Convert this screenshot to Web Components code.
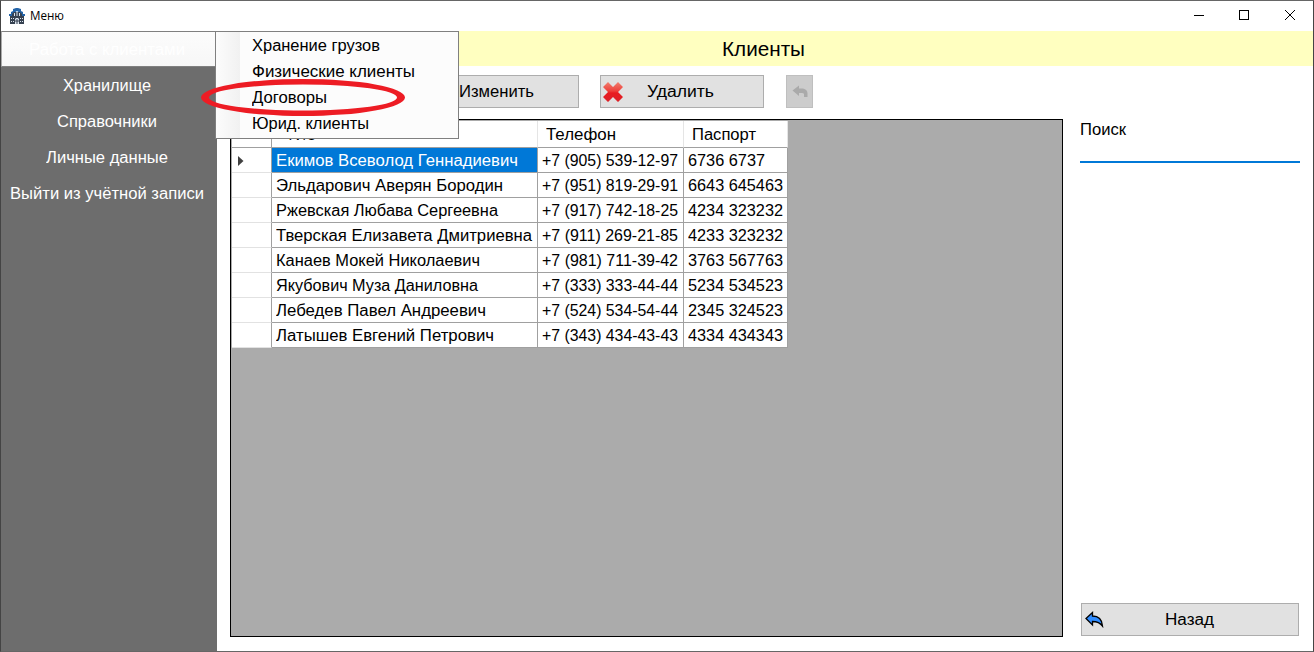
<!DOCTYPE html>
<html lang="ru"><head><meta charset="utf-8"><title>Меню</title>
<style>html,body{margin:0;height:100%;overflow:hidden}body{font:16px "Liberation Sans",Arial,sans-serif;color:#000}</style></head>
<body><app-window></app-window>
<script>
function define(name, render, after) {
  customElements.define(name, class extends HTMLElement {
    constructor() { super(); this.attachShadow({mode: 'open'}); }
    connectedCallback() {
      this.shadowRoot.innerHTML = '<style>*{box-sizing:border-box}</style>' + render(this);
      if (after) after(this);
    }
  });
}
// Label whose glyphs are widened so that it takes up the width in its "w" attribute.
define('fit-label', () => `<style>:host{display:inline-block;white-space:pre;flex:none}span{display:inline-block;transform-origin:0 50%}</style><span><slot></slot></span>`, el => {
  const s = el.shadowRoot.querySelector('span'), w = +el.getAttribute('w');
  el.style.width = w + 'px';
  s.style.transform = 'scaleX(' + w / s.getBoundingClientRect().width + ')';
});
define('title-bar', () => `<style>:host{display:flex;height:30px;align-items:center;background:#fff;font:12px "Open Sans","Noto Sans",sans-serif;padding-left:8px}
.i{width:16px;height:16px;margin-right:5px}.sp{flex:1}.c{width:46px;height:30px;flex:none}fit-label{padding-bottom:2px}.c:last-child{margin-right:-1px}</style>
<svg class="i" viewBox="0 0 16 16"><path d="M0 8V6h2V4l2-1V1l3-1h2l3 1v2l2 1v2h2v2h-3l-2-3-3-2-3 2-2 3z" fill="#2464a8"/><path d="M1 8h2V6l2-2h6l2 2v2h2v8H1z" fill="#364150"/><path d="M5 5h1v3H5zM7.5 4h1v4h-1zM10 5h1v3h-1zM2 10h1v1H2zM4 10h1v1H4zM2 13h1v1H2zM4 13h1v1H4zM11 10h1v1h-1zM13 10h1v1h-1zM11 13h1v1h-1zM13 13h1v1h-1zM6 16v-5l1-1h2l1 1v5z" fill="#dce5ef"/><path d="M8 11v5M6 13h4" stroke="#364150"/></svg>
<fit-label w="34">Меню</fit-label><span class="sp"></span>
<svg class="c" viewBox="0 0 46 30"><path d="M18 14.5h10" stroke="#000" shape-rendering="crispEdges"/></svg>
<svg class="c" viewBox="0 0 46 30"><path d="M17.5 9.5h9v9h-9z" fill="none" stroke="#000" shape-rendering="crispEdges"/></svg>
<svg class="c" viewBox="0 0 46 30"><path d="M17 9l10 10m0-10l-10 10" stroke="#000"/></svg>`);
define('side-item', el => `<style>:host{display:flex;height:36px;align-items:center;justify-content:center;color:#fff;width:212px;padding-top:2px}
:host([open]){width:215px;height:36px;background:linear-gradient(#fcfcfc,#f7f7f7);border:1px solid #808080;border-left-color:#aaa;color:#fff;padding-right:3px}</style><fit-label w="${el.getAttribute('w')}">${el.getAttribute('label')}</fit-label>`);
define('side-bar', () => `<style>:host{display:block;width:216px;background:#6d6d6d;flex:none}</style>
<side-item open w="156" label="Работа с клиентами"></side-item><side-item w="88" label="Хранилище"></side-item><side-item w="100" label="Справочники"></side-item><side-item w="122" label="Личные данные"></side-item><side-item w="194" label="Выйти из учётной записи"></side-item>`);
define('drop-menu', () => `<style>:host{display:block;width:244px;height:108px;border:1px solid #808080;background:linear-gradient(90deg,#fcfcfc 0,#f1f1f1 24px,#fcfcfc 24px);padding:1px 0 0 36px}
div{height:26px;display:flex;align-items:center}</style>
<div><fit-label w="128">Хранение грузов</fit-label></div><div><fit-label w="163">Физические клиенты</fit-label></div><div><fit-label w="75">Договоры</fit-label></div><div><fit-label w="117">Юрид. клиенты</fit-label></div>`);
define('red-ring', () => `<style>:host{display:block;width:206px;height:40px}svg{display:block}</style><svg width="206" height="40"><path fill="#ed1c24" fill-rule="evenodd" d="M1 19.5a102 18.5 0 0 1 204 0a102 18.5 0 0 1-204 0zM9 19.5a94 13 0 0 0 188 0a94 13 0 0 0-188 0z"/></svg>`);
const icons = {
  edit: '<svg width="20" height="20"><path d="M2 18l2-6L14 2l4 4L8 16z" fill="#e8a33a"/></svg>',
  del: '<svg width="20" height="20"><defs><linearGradient id="g" x2="0" y2="1"><stop stop-color="#f08070"/><stop offset=".45" stop-color="#ee3f3a"/><stop offset=".55" stop-color="#e81c20"/><stop offset="1" stop-color="#dc2028"/></linearGradient></defs><path d="M5 0L10 5 15 0 20 5 15 10 20 15 15 20 10 15 5 20 0 15 5 10 0 5z" fill="url(#g)"/></svg>',
  undo: '<svg width="16" height="13"><path d="M.5 5.5L7 .5v3h4q4.5 1 4.5 5V12H12V9q-.5-1-2-1H7v3z" fill="#aaa"/></svg>',
  back: '<svg width="19" height="17"><path d="M1 7.5L7.5 1.5V5C13 5 17 8.500 17.500 15C15 11.500 12.500 10.500 7.500 10.500V14z" fill="#2f8cff" stroke="#000" stroke-width="1.3"/></svg>'
};
define('push-button', el => `<style>:host{display:flex;height:33px;width:164px;align-items:center;background:#e1e1e1;border:1px solid #adadad;flex:none}
:host([off]){width:27px;background:#ccc;border-color:#bfbfbf}svg{display:block}i{flex:none;margin-left:${el.getAttribute('ix')}px}fit-label{margin-left:${el.getAttribute('gap')}px}</style>
<i>${icons[el.getAttribute('icon')]}</i>${el.hasAttribute('label') ? `<fit-label w="${el.getAttribute('w')}">${el.getAttribute('label')}</fit-label>` : ''}`);
const rows = [['Екимов Всеволод Геннадиевич',242,'+7 (905) 539-12-97','6736 6737'],['Эльдарович Аверян Бородин',227,'+7 (951) 819-29-91','6643 645463'],['Ржевская Любава Сергеевна',222,'+7 (917) 742-18-25','4234 323232'],['Тверская Елизавета Дмитриевна',256,'+7 (911) 269-21-85','4233 323232'],['Канаев Мокей Николаевич',204,'+7 (981) 711-39-42','3763 567763'],['Якубович Муза Даниловна',202,'+7 (333) 333-44-44','5234 534523'],['Лебедев Павел Андреевич',210,'+7 (524) 534-54-44','2345 324523'],['Латышев Евгений Петрович',218,'+7 (343) 434-43-43','4334 434343']];
define('data-grid', () => `<style>:host{display:block;width:833px;height:518px;border:1px solid #000;background:#ababab;padding:1px}
.r{display:grid;grid-template-columns:40px 266px 146px 104px;width:556px;height:25px;background:#fff}
.r>div{border-right:1px solid #a0a0a0;border-bottom:1px solid #a0a0a0;display:flex;align-items:center;padding:1px 0 0 4px}
.r>div:first-child{border-bottom-color:#e2e2e2}.h{height:27px}.h>div{border-right-color:#e5e5e5;padding:2px 0 0 8px}.h>div:first-child{border-right-color:#a0a0a0;border-bottom-color:#a0a0a0}.h>div:nth-child(2){padding-left:13px}
.r .s{background:#0078d7;color:#fff}.r svg{margin-left:2px}</style>
<div class="r h"><div></div><div><fit-label w="32">ФИО</fit-label></div><div><fit-label w="70">Телефон</fit-label></div><div><fit-label w="64">Паспорт</fit-label></div></div>
${rows.map((r, i) => `<div class="r"><div>${i ? '' : '<svg width="6" height="10"><path d="M0 0l5.5 5L0 10z" fill="#404040"/></svg>'}</div><div class="${i ? '' : 's'}"><fit-label w="${r[1]}">${r[0]}</fit-label></div><div><fit-label w="136">${r[2]}</fit-label></div><div><fit-label w="${i ? 95 : 77}">${r[3]}</fit-label></div></div>`).join('')}`);
define('search-panel', () => `<style>:host{display:flex;flex-direction:column;width:220px;height:518px}.f{height:44px;border-bottom:2px solid #0078d7;padding-top:2px}push-button{width:218px;margin:auto 0 1px 1px}</style><div class="f"><fit-label w="46">Поиск</fit-label></div><push-button icon="back" label="Назад" w="49" ix="3" gap="61"></push-button>`);
define('client-page', () => `<style>:host{display:flex;flex-direction:column;flex:1;background:#fff}
header{height:35px;background:#ffffc0;display:flex;align-items:center;justify-content:center;font-size:20px;padding:1px 4px 0 0}
.t{display:flex;padding:9px 0 0 198px;height:53px}.t push-button+push-button{margin-left:21px}.t push-button[off]{margin-left:22px}.m{display:flex;gap:17px;padding-left:13px}</style>
<header><fit-label w="83">Клиенты</fit-label></header>
<div class="t"><push-button icon="edit" label="Изменить" w="75" ix="3" gap="20"></push-button><push-button icon="del" label="Удалить" w="67" ix="2" gap="24"></push-button><push-button off icon="undo" ix="5"></push-button></div>
<div class="m"><data-grid></data-grid><search-panel></search-panel></div>`);
define('app-window', () => `<style>:host{display:block;position:relative;width:1314px;height:652px;border:1px solid #444;border-top-color:#666;border-bottom-color:#666;background:#fff;overflow:hidden}
.b{display:flex;height:620px}drop-menu{position:absolute;left:214px;top:30px}red-ring{position:absolute;left:199px;top:77px}</style>
<title-bar></title-bar><div class="b"><side-bar></side-bar><client-page></client-page></div><drop-menu></drop-menu><red-ring></red-ring>`);
// :host boxes count borders and padding in their stated size
const hostSizing = new CSSStyleSheet();
hostSizing.replaceSync(':host{box-sizing:border-box}');
(function apply(root) { root.querySelectorAll('*').forEach(e => { if (e.shadowRoot) { if (e.localName !== 'fit-label') e.shadowRoot.adoptedStyleSheets = [hostSizing]; apply(e.shadowRoot); } }); })(document);
</script></body></html>
